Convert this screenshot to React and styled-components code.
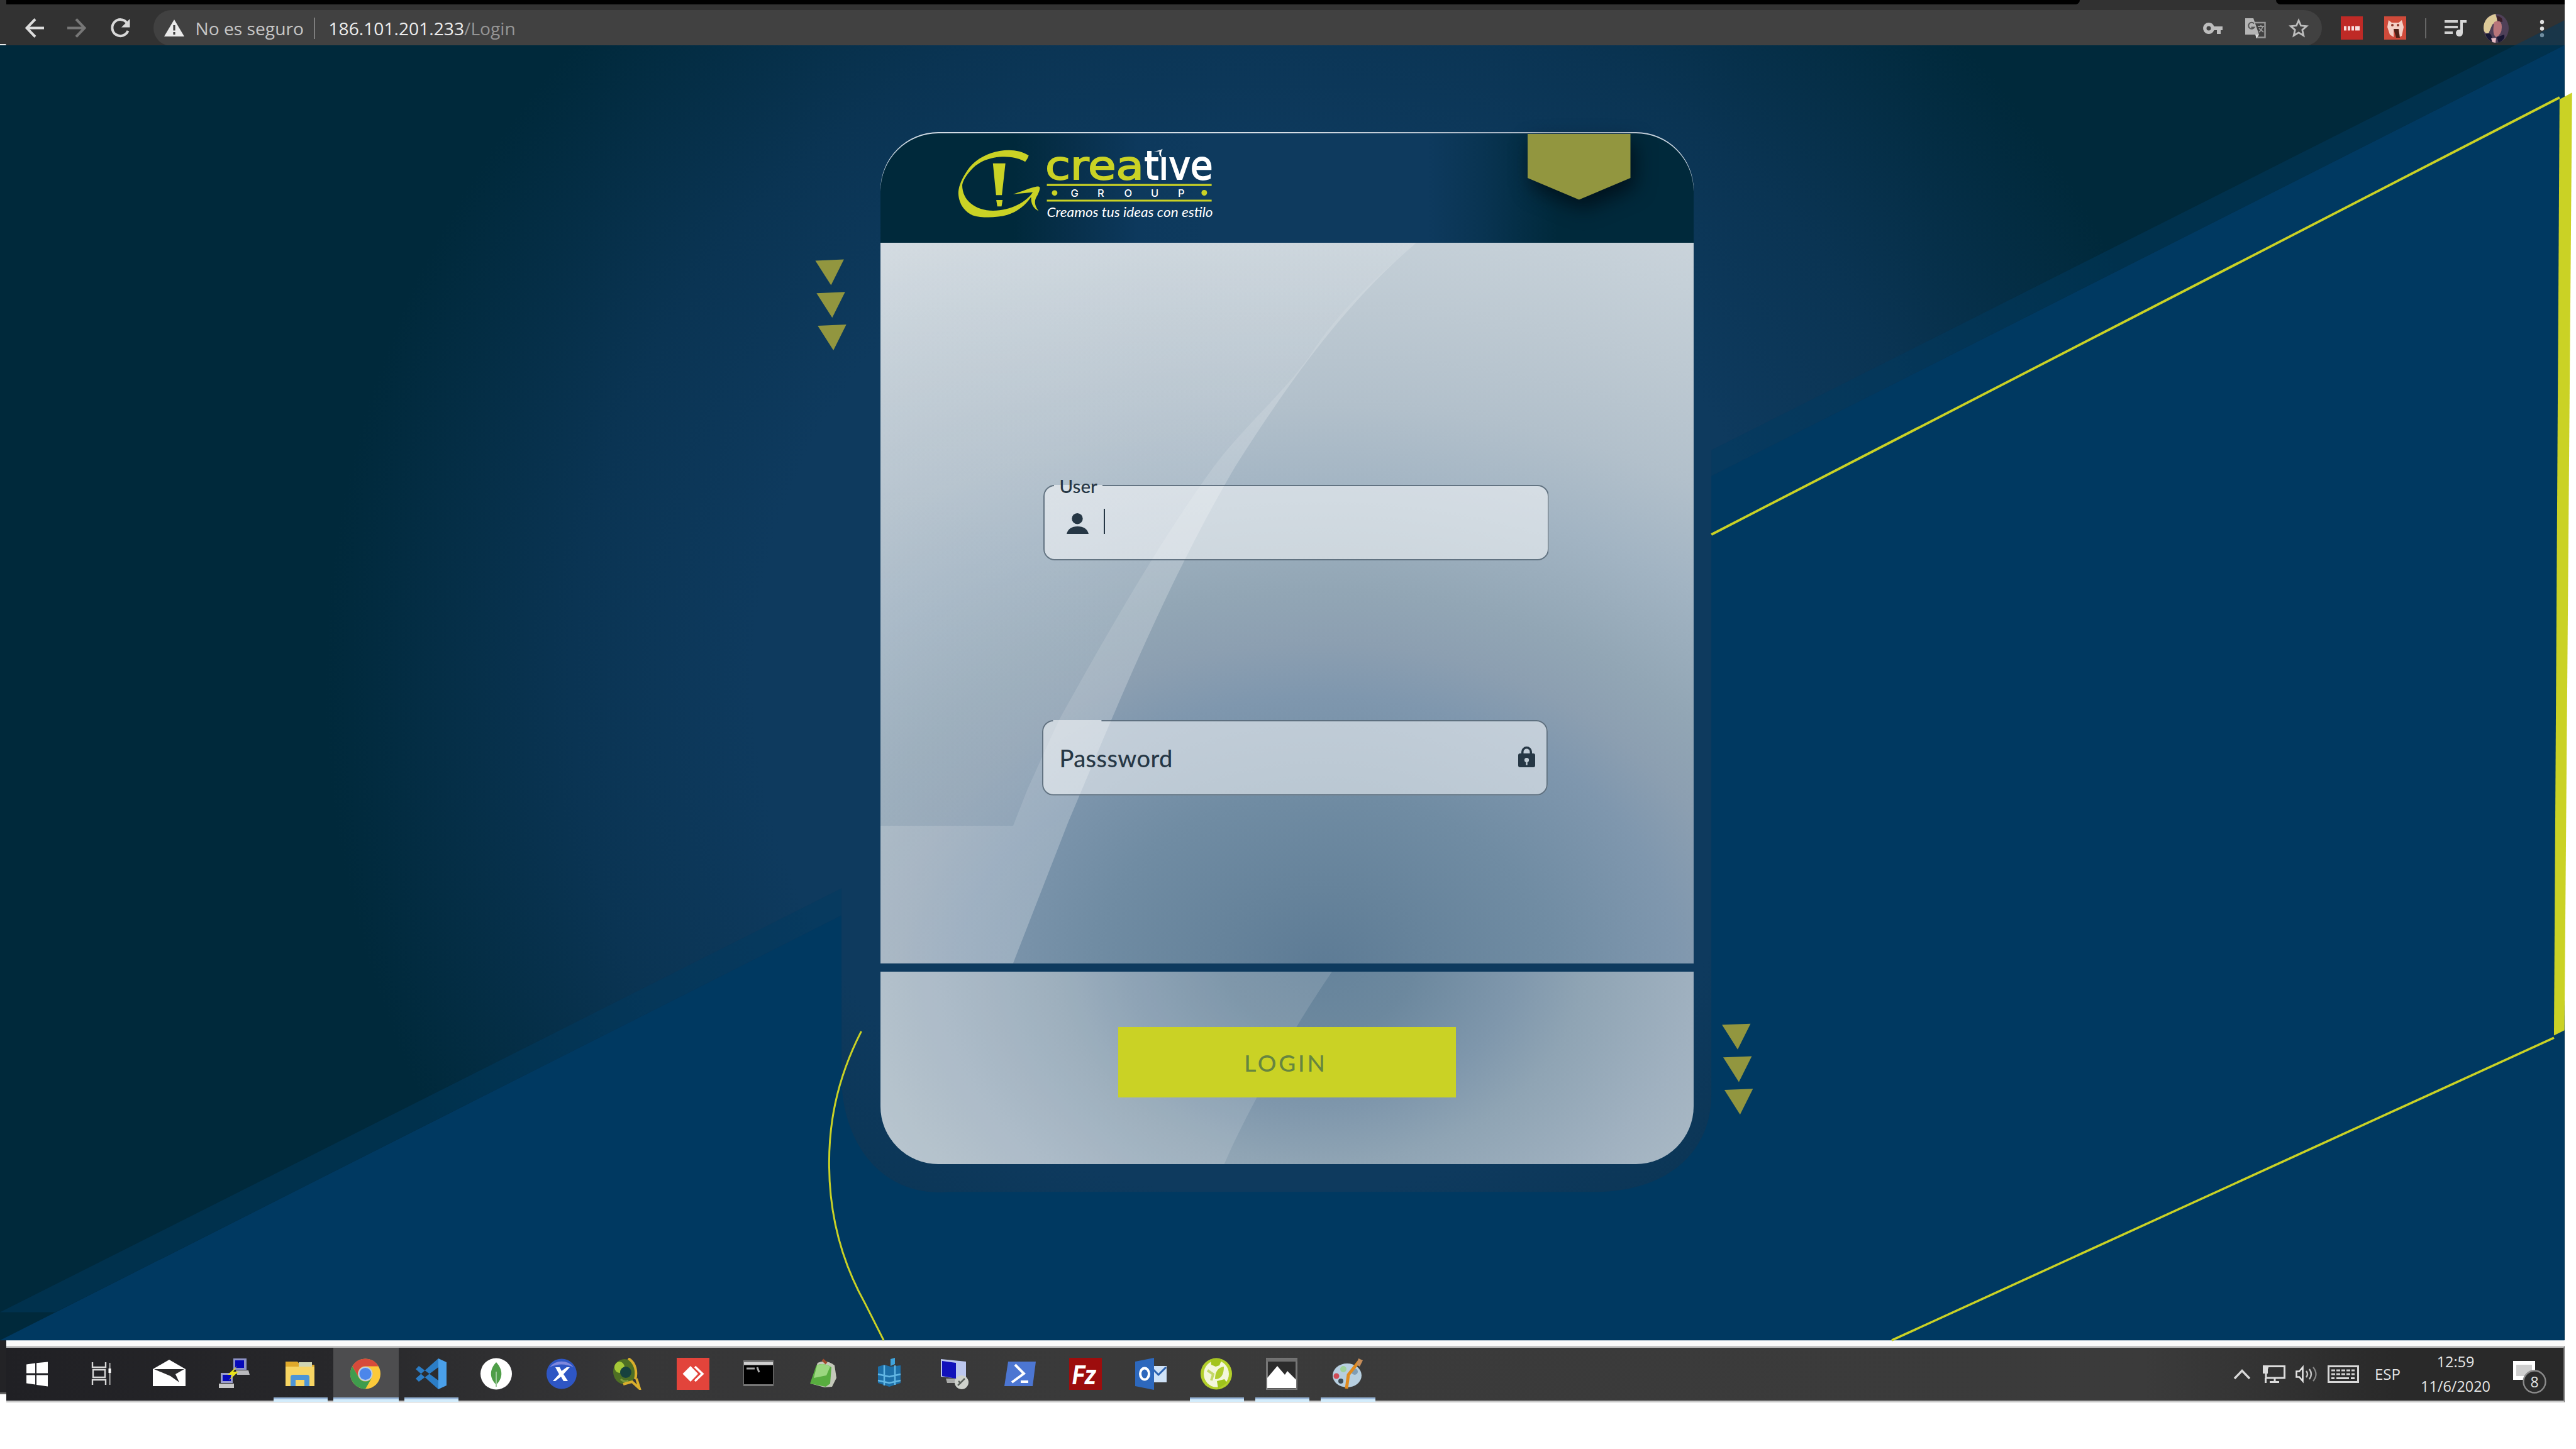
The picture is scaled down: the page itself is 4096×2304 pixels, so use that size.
import React from 'react';
import styled, { createGlobalStyle } from 'styled-components';

const LIME = '#cad225';
const OLIVE = '#92963f';
const INK = '#263745';

const Global = createGlobalStyle`
  * { box-sizing: border-box; }
  html, body { margin: 0; padding: 0; background: #fff; overflow: hidden; }
`;

const Screen = styled.div`
  position: relative;
  width: 4096px;
  height: 2304px;
  overflow: hidden;
  display: flex;
  flex-direction: column;
  background: #fff;
  font-family: 'Open Sans', 'Noto Sans', sans-serif;
`;

/* ---------- browser bar ---------- */
const Browser = styled.header`
  width: 4078px;
  height: 72px;
  flex: none;
  overflow: hidden;
  background: #323232;
`;
const TabStrip = styled.div`
  height: 6.5px;
  display: flex;
  padding-left: 9.6px;
`;
const TabGap = styled.div`
  width: ${(p) => p.$w}px;
  background: #000;
  border-radius: ${(p) => p.$r};
`;
const ActiveTab = styled.div`
  width: 312px;
`;
const NavRow = styled.div`
  height: 76px;
  display: flex;
  align-items: center;
  padding-left: 40px;
`;
const Glyph = styled.svg`
  display: block;
  flex: none;
  width: ${(p) => p.$w}px;
  height: ${(p) => p.$h}px;
  margin-left: ${(p) => p.$ml || 0}px;
  overflow: visible;
`;
const Omnibox = styled.div`
  width: 3448px;
  height: 57px;
  margin-left: 36px;
  border-radius: 29px;
  background: #414141;
  display: flex;
  align-items: center;
  padding-left: 17px;
`;
const UrlText = styled.span`
  font-size: 28.2px;
  line-height: 40px;
  white-space: nowrap;
  color: ${(p) => p.$c};
  margin-left: ${(p) => p.$ml || 0}px;
`;
const Rule = styled.div`
  width: 2.5px;
  height: ${(p) => p.$h}px;
  margin-left: ${(p) => p.$ml}px;
  background: ${(p) => p.$c};
`;
const Spacer = styled.div`
  flex: 1;
`;

/* ---------- page ---------- */
const Page = styled.main`
  width: 4078px;
  height: 2059px;
  flex: none;
  padding: 137.8px 0 0 1400px;
  background: radial-gradient(circle at 2019px 1014px, #0e3a5e 0, #0e3a5e 820px, #0a3453 1110px, #00293b 1502px);
`;
const Backdrop = styled.svg`
  position: absolute;
  left: 0;
  top: 0;
  width: 4096px;
  height: 2304px;
`;
const Card = styled.section`
  position: relative;
  width: 1293px;
  display: flex;
  flex-direction: column;
  gap: 13px;
`;
const UpperCard = styled.div`
  border-radius: 92px 92px 0 0;
  padding-top: 2.6px;
  background: linear-gradient(90deg, #cfdae4, #d6dee6 50%, #a9b7c6 75%, #cfdae4);
`;
const CardHeader = styled.header`
  position: relative;
  height: 174px;
  border-radius: 92px 92px 0 0;
  padding: 13.5px 0 0 108.5px;
  background: linear-gradient(90deg, #00293b 0, #00293b 212px, #072f4a 300px, #0d395d 410px, #0e3a5e 520px, #0e3a5e 870px, #093452 955px, #00293b 1077px);
`;
const Logo = styled.svg`
  display: block;
  width: 440px;
  height: 131px;
  overflow: visible;
`;
const RibbonShade = styled.div`
  position: absolute;
  left: 1029px;
  top: 0.6px;
  filter: drop-shadow(7px 14px 16px rgba(0, 10, 18, 0.75));
`;
const Ribbon = styled.div`
  width: 163.5px;
  height: 104.6px;
  background: ${OLIVE};
  clip-path: polygon(0 0, 100% 0, 100% 67%, 50% 100%, 0 67%);
`;
const Form = styled.div`
  position: relative;
  height: 1145.4px;
  padding: 384.6px 0 0 258.5px;
  display: flex;
  flex-direction: column;
  gap: 253.4px;
  background: radial-gradient(ellipse 1820px 1400px at 700px 1154px, #5d7b95 0, #66839b 9%, #708ca3 20%, #7f97ae 31%, #8c9fb1 37%, #92a6b5 43%, #a2b4c3 54%, #b2c0cb 64%, #bdc9d2 75%, #c5d0d8 84%, #ced6dd 93%, #d2dae0 100%);
`;
const Sheen = styled.svg`
  position: absolute;
  left: 0;
  top: 0;
  width: 1293px;
  height: ${(p) => p.$h}px;
`;
const Field = styled.div`
  position: relative;
  width: 804px;
  height: 120.2px;
  margin-left: ${(p) => p.$ml || 0}px;
  padding: 0 20.4px ${(p) => p.$pb}px ${(p) => p.$pl}px;
  border-radius: 18px;
  background: rgba(255, 255, 255, 0.52);
  background-clip: padding-box;
  display: flex;
  align-items: flex-end;
  &::before {
    content: '';
    position: absolute;
    inset: 0;
    border: 2.7px solid rgba(60, 80, 98, 0.75);
    border-radius: 18px;
    clip-path: polygon(0 0, 17.5px 0, 17.5px 10px, 94.5px 10px, 94.5px 0, 100% 0, 100% 100%, 0 100%);
  }
`;
const FloatLabel = styled.label`
  position: absolute;
  left: 26px;
  top: -11.8px;
  font: 500 29.5px/28.5px Lato, sans-serif;
  color: ${INK};
`;
const Placeholder = styled.span`
  font: 500 38px/38px Lato, sans-serif;
  letter-spacing: 0.4px;
  color: ${INK};
  margin-bottom: -4px;
`;
const Caret = styled.div`
  width: 2.7px;
  height: 39.6px;
  margin-left: 23.8px;
  background: ${INK};
`;
const CardFooter = styled.footer`
  position: relative;
  height: 306.4px;
  border-radius: 0 0 92px 92px;
  overflow: hidden;
  padding: 88px 0 0 378px;
  background: radial-gradient(ellipse 1000px 770px at 700px -20px, #65839b 0, #6c889e 15%, #7f97ac 31%, #8fa4b4 42%, #a0b1c0 60%, #afbec8 80%, #bac6d0 100%);
`;
const LoginButton = styled.button`
  position: relative;
  display: flex;
  align-items: center;
  justify-content: center;
  width: 536.7px;
  height: 112px;
  border: 0;
  border-radius: 0;
  padding: 2px 4px 0 0;
  background: ${LIME};
  color: #668540;
  font: 500 37px Lato, sans-serif;
  letter-spacing: 3.8px;
`;

/* ---------- taskbar ---------- */
const DockArea = styled.div`
  flex: none;
  display: flex;
  width: 4078px;
`;
const LeftSliver = styled.div`
  width: 9.6px;
  height: 86px;
  background: #232326;
  border-bottom: 3.5px solid #666;
`;
const DockColumn = styled.div`
  flex: 1;
  border-top: 9.4px solid #fafafa;
`;
const Dock = styled.nav`
  height: 89.8px;
  border-top: 3.6px solid #c4c4c4;
  border-bottom: 3.6px solid #c8c8c8;
  border-right: 2.4px solid #777;
  display: flex;
  background: linear-gradient(90deg, #202024 0, #27272a 500px, #363637 1000px, #3a3a3a 1700px, #3b3b3b 3400px, #303030 3650px, #292929 3800px, #292929 100%);
`;
const Slot = styled.div`
  position: relative;
  flex: none;
  width: 104.1px;
  height: 82.6px;
  display: flex;
  align-items: center;
  justify-content: center;
  background: ${(p) => (p.$active ? '#4d4d4f' : 'transparent')};
  &::after {
    content: '';
    display: ${(p) => (p.$open ? 'block' : 'none')};
    position: absolute;
    left: ${(p) => (p.$active ? 0 : 9)}px;
    right: ${(p) => (p.$active ? 0 : 9)}px;
    bottom: -3.6px;
    height: 6.8px;
    background: linear-gradient(#98b6d8 0 45%, #d3ecfb 45%);
  }
`;
const DockIcon = styled.svg`
  width: 52px;
  height: 51px;
  display: block;
  margin-right: ${(p) => p.$nudge}px;
`;
const Tray = styled.div`
  margin-left: auto;
  display: flex;
  align-items: center;
  color: #e4e4e4;
`;
const Lang = styled.span`
  font-size: 24px;
  width: 42px;
  margin-left: 25px;
`;
const Clock = styled.div`
  width: 113px;
  margin-left: 30px;
  text-align: center;
  font-size: 23.4px;
  line-height: 38.5px;
`;

const icons = [
  { id: 'start', nudge: 5, art: (
    <g fill="#fff"><path d="M9 10.500l14-2v16H9zM25 8.200L43 6.500v18H25zM9 27.500h14v15l-14-2zM25 27.500h18v18l-18-2.500z" /></g>) },
  { id: 'views', nudge: 7, art: (
    <g fill="none" stroke="#d8d8d8" strokeWidth="2.400"><path d="M11 7v8h21V7M11 43v-8h21v8M12 19h19v12H12z" /><path d="M38.500 8v35" stroke="#999" /><path d="M38.500 17v7" stroke="#fff" strokeWidth="4" /></g>) },
  { id: 'mail', art: (
    <g><path d="M0 18L26 3l26 15v27H0z" fill="#fff" /><path d="M2 18h48L36 26l6 13-14-10z" fill="#2a2a2c" /></g>) },
  { id: 'putty', nudge: 5, art: (
    <g><rect x="26" y="1" width="21" height="18" fill="#8d92c8" /><rect x="29" y="4" width="14" height="12" fill="#0608b8" /><path d="M30 20h20l2 7H32z" fill="#b9b9bd" /><rect x="6" y="24" width="19" height="16" fill="#9a9ccb" /><rect x="9" y="27" width="13" height="10" fill="#0608b8" /><path d="M3 41h24v7H3z" fill="#c7c7c7" /><path d="M32 13L17 27h8l-6 9 15-14h-8z" fill="#e8e21a" /></g>) },
  { id: 'folder', open: true, art: (
    <g><path d="M3 6h19l4 5h23v34H3z" fill="#dfa92b" /><rect x="24" y="7" width="21" height="9" fill="#cfd6b4" /><path d="M3 14h46v31H3z" fill="#f7d563" /><path d="M11 45V31q0-4 4-4h22q4 0 4 4v14h-8V35H19v10z" fill="#4c95d8" /></g>) },
  { id: 'chrome', open: true, active: true, art: (
    <g><circle cx="26" cy="25.500" r="24" fill="#fbc93a" /><path d="M5.200 13.500A24 24 0 0 1 46.800 13.500H26a12 12 0 0 0-10.400 18z" fill="#d64a3b" /><path d="M5.200 13.500A24 24 0 0 0 26 49.500L36.400 31.500a12 12 0 0 1-20.800 0z" fill="#3f9c4d" /><circle cx="26" cy="25.500" r="11.500" fill="#b9cbe9" /><circle cx="26" cy="25.500" r="9.500" fill="#4c86ea" /></g>) },
  { id: 'code', open: true, art: (
    <g><path d="M38 1L2 33l5 5 31-23zM38 50L2 18l5-5 31 23z" fill="#2b7dc6" /><path d="M38 1l13 6v37l-13 6z" fill="#4aa0ea" /></g>) },
  { id: 'mongo', art: (
    <g><circle cx="26" cy="25.500" r="25" fill="#fff" /><path d="M26 7c12 13 10 26 0 36-10-10-12-23 0-36z" fill="#4f9e48" /><path d="M26 22v24" stroke="#9cc79a" strokeWidth="2" /></g>) },
  { id: 'xming', art: (
    <g><circle cx="26" cy="25.500" r="24" fill="#2e56c4" /><path d="M7 15a24 24 0 0 1 38 0q-19-9-38 0z" fill="#7f88dd" /><path d="M16 15h7l3 6 8-6h5L29 26l7 11h-7l-4-7-9 7h-4l10-11z" fill="#fff" /></g>) },
  { id: 'gis', art: (
    <g><ellipse cx="22" cy="22" rx="18" ry="20" fill="#4e6f24" /><ellipse cx="14" cy="15" rx="8" ry="9" fill="#a5c838" /><circle cx="24" cy="23" r="9" fill="#17413e" /><path d="M16 34q6 6 12 2" stroke="#7c9a3a" strokeWidth="3" fill="none" /><path d="M28 1c12 7 14 22 11 33M20 42l14-4 12 11-5-16" stroke="#d9ae2c" strokeWidth="4" fill="none" /></g>) },
  { id: 'anydesk', art: (
    <g><rect width="52" height="51" fill="#e2443b" /><path d="M22 13l12 12.500L22 38 9.500 25.500z" fill="#fff" /><path d="M29 14l12 11.500L29 37" stroke="#fff" strokeWidth="3.500" fill="none" /></g>) },
  { id: 'cmd', art: (
    <g><rect x="2" y="4" width="48" height="41" fill="#777" /><rect x="3" y="7" width="46" height="4" fill="#d0d0d0" /><rect x="3" y="12" width="46" height="30" fill="#000" /><path d="M7 17h13M24 15l3 8" stroke="#aaa" strokeWidth="3" /></g>) },
  { id: 'notes', art: (
    <g><path d="M16 8q14-6 27 4l3 20-7 14-12 1-22-6z" fill="#c4c8ba" /><path d="M14 12q12-5 24 3l-2 26-7 5-25-5z" fill="#58ad3f" /><path d="M15 12q10-5 21 2l-6 14-20 4z" fill="#9bd77f" /><path d="M24 3l6 6" stroke="#a04a2c" strokeWidth="4" /></g>) },
  { id: 'cubes', art: (
    <g><path d="M8 14l10-3 10 3 16-2v28l-18 6-18-6z" fill="#1c6fa8" /><path d="M8 26l18 4 18-4M18 12v32M35 12v31M8 36l18 4 18-4" stroke="#62b7e4" strokeWidth="2.500" fill="none" /><path d="M28 2l7-2v10l-7 3z" fill="#3fa3dc" /></g>) },
  { id: 'remote', art: (
    <g><path d="M4 2l40 4v28L4 30z" fill="#bcc7ee" /><path d="M6 5l22 3v25L6 29z" fill="#1112bb" /><path d="M12 33h20l4 7H14z" fill="#a9aaa8" /><circle cx="37" cy="39" r="11" fill="#cfd2cc" /><path d="M31 44l11-11M32 37l4 4" stroke="#5a605a" strokeWidth="2.500" /></g>) },
  { id: 'shell', art: (
    <g><path d="M7 6h44l-5 39H1z" fill="#4c76d2" /><path d="M18 11l14 14-19 14M27 38h12" stroke="#fff" strokeWidth="4" fill="none" /></g>) },
  { id: 'filezilla', art: (
    <g><rect width="52" height="51" fill="#9d0d0d" /><text x="5" y="42" fill="#fff" fontFamily="Roboto" fontStyle="italic" fontWeight="700" fontSize="42" textLength="38" lengthAdjust="spacingAndGlyphs">Fz</text></g>) },
  { id: 'outlook', art: (
    <g><rect x="24" y="13" width="27" height="26" fill="#cfe2f7" /><path d="M26 15l12 12 12-12" stroke="#2b62b0" strokeWidth="3" fill="none" /><path d="M1 6l30-6v51L1 45z" fill="#2d68bd" /><ellipse cx="16" cy="25.500" rx="7" ry="9" fill="none" stroke="#fff" strokeWidth="4" /></g>) },
  { id: 'leaf', open: true, art: (
    <g><circle cx="26" cy="25.500" r="25" fill="#b3cf2a" /><ellipse cx="26" cy="25.500" rx="20" ry="21" fill="#f3f6dc" /><path d="M17 2h18l-4 10-6 2-7-3z" fill="#a3c41d" /><path d="M27 37l12-3 4 6-14 9z" fill="#9fc41c" /><path d="M38 14q-14 2-14 20 14 0 14-20z" fill="#b0cd2d" /><path d="M12 20l9 6-3 10" stroke="#c3d866" strokeWidth="4" fill="none" /></g>) },
  { id: 'photos', open: true, art: (
    <g><path d="M2.500 1h47v49h-47z" fill="#2c2c2c" stroke="#777" strokeWidth="3" /><path d="M1 1h50v5H1z" fill="#707070" /><path d="M3 48V32l16-19 12 14 4-6 14 14v13z" fill="#fff" /></g>) },
  { id: 'paint', open: true, art: (
    <g><ellipse cx="25" cy="28" rx="23" ry="19" fill="#b7cfe0" /><circle cx="8" cy="29" r="4.500" fill="#cf4a55" /><circle cx="19" cy="18" r="5" fill="#9fd29a" /><circle cx="15" cy="37" r="4" fill="#3d4c57" /><circle cx="37" cy="22" r="5" fill="#7f9db5" /><path d="M46 3L27 27l-3 22" stroke="#e08a1e" strokeWidth="5" fill="none" /><path d="M43 1l7 3-5 10-5-3z" fill="#c68d59" /></g>) },
];

const Arrows = ({ x, y }) => (
  <g fill={OLIVE} transform={`translate(${x} ${y})`}>
    {[0, 1, 2].map((i) => (
      <path key={i} d="M0 3.200L76.500 0 42 69z" transform={`translate(${i * 3.2} ${i * 87.1})`} />
    ))}
  </g>
);

function BrowserBar() {
  return (
    <Browser>
      <TabStrip>
        <TabGap $w={3302} $r="0 0 14px 0" />
        <ActiveTab />
        <TabGap $w={460} $r="0 0 0 14px" />
      </TabStrip>
      <NavRow>
        <Glyph $w={30} $h={31} viewBox="0 0 30 31"><path d="M30 15.500H3M16 1.500L2.500 15.500 16 29.500" fill="none" stroke="#dcdcdc" strokeWidth="4" /></Glyph>
        <Glyph $w={30} $h={31} $ml={37} viewBox="0 0 30 31"><path d="M0 15.500h27M14 1.500l13.500 14L14 29.500" fill="none" stroke="#777" strokeWidth="4" /></Glyph>
        <Glyph $w={34} $h={32} $ml={37} viewBox="0 0 34 32"><path d="M28 7.500A13 13 0 1 0 29.500 20" fill="none" stroke="#d8d8d8" strokeWidth="4" /><path d="M32.500 1v13.500H19z" fill="#d8d8d8" /></Glyph>
        <Omnibox>
          <Glyph $w={32} $h={27} viewBox="0 0 32 27"><path d="M16 0l16 27H0z" fill="#eaeaea" /><path d="M16 9v8.500M16 20v4" stroke="#414141" strokeWidth="3.200" /></Glyph>
          <UrlText $c="#c6c6c6" $ml={17.500}>No es seguro</UrlText>
          <Rule $h={34} $ml={16} $c="#7d7d7d" />
          <UrlText $c="#ededed" $ml={21}>186.101.201.233</UrlText>
          <UrlText $c="#959595">/Login</UrlText>
          <Spacer />
          <Glyph $w={31} $h={18} viewBox="0 0 31 18"><path d="M9 0a9 9 0 0 1 8.500 6H31v6h-3v6h-6v-6h-4.500A9 9 0 1 1 9 0zm0 5.500a3.500 3.500 0 1 0 0 7 3.500 3.500 0 0 0 0-7z" fill="#bdbdbd" /></Glyph>
          <Glyph $w={33} $h={32} $ml={35.500} viewBox="0 0 33 32"><path d="M15 7h16.500v23.500H17" fill="none" stroke="#999" strokeWidth="2.400" /><path d="M0 0h13l9 26H0z" fill="#b5b5b5" /><path d="M14 8.500a5 5 0 1 0 .5 6h-5" fill="none" stroke="#555" strokeWidth="2" /><path d="M20 13h10M25 11v2M28 13q-2 6-6 9M22 16l7 6" stroke="#999" strokeWidth="1.800" fill="none" /><path d="M16 26h6l-4 6z" fill="#ddd" /></Glyph>
          <Glyph $w={30} $h={31} $ml={37.500} viewBox="0 0 30 31"><path d="M15 3.500l3.600 8.300 9 .8-6.800 6 2 8.900L15 22.800l-7.800 4.700 2-8.900-6.800-6 9-.8z" fill="none" stroke="#bdbdbd" strokeWidth="2.800" /></Glyph>
          <Glyph $w={22} $h={1} />
        </Omnibox>
        <Glyph $w={35} $h={37} $ml={30} viewBox="0 0 35 37"><rect width="35" height="37" fill="#bf2a26" /><path d="M5 19h4M11 19h4M17 19h4M23 19h7" stroke="#f7dede" strokeWidth="7" /></Glyph>
        <Glyph $w={35} $h={37} $ml={34} viewBox="0 0 35 37"><rect width="35" height="37" fill="#cf4a3a" /><path d="M7 6l5 4h11l5-4 3 11-3 14-6 3V20H15v13l-6-4-4-12z" fill="#f3cfc6" /><path d="M15 20h8l2 14h-6z" fill="#4e2017" /><circle cx="13" cy="14" r="2" fill="#8d3428" /><circle cx="22" cy="14" r="2" fill="#8d3428" /></Glyph>
        <Rule $h={32} $ml={29.500} $c="#666" />
        <Glyph $w={35} $h={26} $ml={28.500} viewBox="0 0 35 26"><path d="M0 2h21M0 11h21M0 20h13" stroke="#d0d0d0" strokeWidth="4" /><path d="M27 20V2h8" fill="none" stroke="#d8d8d8" strokeWidth="4" /><circle cx="23.500" cy="20.500" r="5.500" fill="#d8d8d8" /></Glyph>
        <Glyph $w={42} $h={48} $ml={26} viewBox="0 0 42 48"><ellipse cx="21" cy="24" rx="20" ry="23" fill="#4f4058" /><path d="M20 1Q1 6 1 24q1 10 8 8l6-14 8-6z" fill="#dcc998" /><path d="M22 4q10 2 9 10l-8-1z" fill="#3a1f2a" /><path d="M18 14q12-5 12 8 0 12-9 16-7-4-3-24z" fill="#b8757a" /><path d="M4 33q8-3 10 4l2 9Q6 42 4 33zM22 38l12-4q2 8-9 13z" fill="#171633" /><path d="M13 40l8-1-1 8-5-1z" fill="#e8bcc4" /></Glyph>
        <Glyph $w={6} $h={28} $ml={49} viewBox="0 0 6 28"><g fill="#dedede"><circle cx="3" cy="4" r="3.200" /><circle cx="3" cy="14.500" r="3.200" /><circle cx="3" cy="25" r="3.200" /></g></Glyph>
      </NavRow>
    </Browser>
  );
}

function PageBackdrop() {
  return (
    <Backdrop viewBox="0 0 6897 3879" preserveAspectRatio="none">
      <defs>
        <mask id="frame" maskUnits="userSpaceOnUse" x="0" y="0" width="6897" height="3879">
          <rect width="6897" height="3879" fill="#fff" />
          <path d="M2253 700H4582V2930C4582 3080 4470 3190 4270 3191H2540C2360 3205 2253 3060 2253 2880Z" fill="#000" />
        </mask>
      </defs>
      <g mask="url(#frame)">
        <path d="M6866 54.500L0 3513H148L6866 121Z" fill="#003960" fillOpacity="0.500" />
        <path d="M6866 121L0 3588H6866Z" fill="#003961" />
      </g>
      <path d="M0 118h16v3H0z" fill="#fff" />
      <path d="M4582 1431L6853 261" stroke={LIME} strokeWidth="6.500" />
      <path d="M6838 2778L5065 3588" stroke={LIME} strokeWidth="6" />
      <path d="M6853 266L6886.500 248L6866 2758L6838 2772Z" fill={LIME} />
      <path d="M2306 2761C2235 2900 2219 3020 2220 3121C2221 3260 2255 3380 2316 3489L2366 3588" fill="none" stroke={LIME} strokeWidth="5" />
      <Arrows x={2183} y={694.6} />
      <Arrows x={4610.5} y={2740.4} />
    </Backdrop>
  );
}

function BrandLogo() {
  return (
    <Logo viewBox="0 0 440 131">
      <g transform="scale(.28028 .19797)">
        <g fill={LIME}>
          <path d="M452 107C420 78 380 64 340 64C240 64 150 130 105 225C70 300 53 360 53 410C55 500 90 560 135 588C190 612 270 608 330 585C390 560 435 505 466 440C464 490 475 530 508 553C480 500 485 460 500 430C512 400 516 375 515 365C514 357 505 355 495 358C455 370 410 400 362 418L475 403C440 480 350 550 250 551C150 550 75 470 75 345C80 300 110 240 150 190C200 135 260 117 315 117C360 118 400 130 432 158C442 140 448 125 452 107Z" />
          <path d="M249 171H320L300 426H267ZM268 465H304L298 516H274Z" />
          <path d="M555 336H1490V352H555ZM555 462H1490V477H555Z" />
          <ellipse cx="599" cy="408" rx="16" ry="22" />
          <ellipse cx="1448" cy="407" rx="16" ry="23" />
        </g>
        <path d="M1161 76C1180 72 1198 64 1212 54C1204 76 1198 92 1208 122C1192 106 1190 92 1195 74Z" fill="#fff" />
      </g>
      <g fontFamily="'DejaVu Sans', sans-serif" fontSize="63" strokeWidth="1.800">
        <text x="153" y="59" fill={LIME} stroke={LIME} textLength="157" lengthAdjust="spacingAndGlyphs">crea</text>
        <text x="310.500" y="59" fill="#fff" stroke="#fff" textLength="109" lengthAdjust="spacingAndGlyphs">tıve</text>
      </g>
      <text x="193.500 236 278.500 321 364" y="86.700" fill="#fff" fontFamily="Inter, sans-serif" fontWeight="500" fontSize="16.500">GROUP</text>
      <text x="155.500" y="118.700" fill="#fff" fontFamily="Lato, sans-serif" fontStyle="italic" fontSize="21" textLength="264" lengthAdjust="spacingAndGlyphs">Creamos tus ideas con estilo</text>
    </Logo>
  );
}

function LoginCard() {
  return (
    <Card>
      <UpperCard>
        <CardHeader>
          <BrandLogo />
          <RibbonShade><Ribbon /></RibbonShade>
        </CardHeader>
        <Form>
          <Sheen $h={1145.4} viewBox="0 0 1293 1145.400">
            <defs>
              <linearGradient id="sheenA" x1="0" y1="0" x2="0" y2="1"><stop offset="0" stopColor="#fff" stopOpacity=".2" /><stop offset="1" stopColor="#fff" stopOpacity=".25" /></linearGradient>
              <linearGradient id="sheenB" x1="0" y1="0" x2="0" y2="1"><stop offset="0" stopColor="#5d7b95" stopOpacity="0.020" /><stop offset=".3" stopColor="#5d7b95" stopOpacity=".09" /><stop offset="1" stopColor="#5d7b95" stopOpacity=".2" /></linearGradient>
            </defs>
            <path d="M0 0H852C740 95 650 220 564 356C450 550 365 765 299 920L211 1145.400H0Z" fill="url(#sheenA)" />
            <path d="M0 0H852C770 70 720 120 680 184C630 250 580 290 530 356C440 480 350 640 285 757C260 810 245 845 233 871L211 927H0Z" fill="url(#sheenB)" />
          </Sheen>
          <Field $pl={37.300} $pb={42.600}>
            <FloatLabel>User</FloatLabel>
            <Glyph $w={35} $h={33} viewBox="0 0 35 33"><circle cx="17" cy="8.700" r="8.700" fill={INK} /><path d="M0 33C2 25 8 21 17.500 21S33 25 35 33Z" fill={INK} /></Glyph>
            <Caret />
          </Field>
          <Field $ml={-1.6} $pl={27.500} $pb={45}>
            <Placeholder>Passsword</Placeholder>
            <Spacer />
            <Glyph $w={27} $h={33} viewBox="0 0 27 33"><path d="M3 11H5V8.500a8.500 8.500 0 0 1 17 0V11h2a3 3 0 0 1 3 3v16a3 3 0 0 1-3 3H3a3 3 0 0 1-3-3V14a3 3 0 0 1 3-3zm5.500 0h10V8.500a5 5 0 0 0-10 0z" fill={INK} /><circle cx="13.500" cy="21.500" r="3.600" fill="#c3ced7" /><path d="M12.300 22h2.400v7.500h-2.400z" fill="#c3ced7" /></Glyph>
          </Field>
        </Form>
      </UpperCard>
      <CardFooter>
        <Sheen $h={306.4} viewBox="0 0 1293 306.400">
          <path d="M0 0H718C670 70 630 140 599 199C580 235 562 270 546.500 306.400H0Z" fill="#fff" fillOpacity=".13" />
        </Sheen>
        <LoginButton>LOGIN</LoginButton>
      </CardFooter>
    </Card>
  );
}

function Taskbar() {
  return (
    <DockArea>
      <LeftSliver />
      <DockColumn>
        <Dock>
          {icons.map((i) => (
            <Slot key={i.id} $open={i.open} $active={i.active}>
              <DockIcon $nudge={i.nudge || 2} viewBox="0 0 52 51">{i.art}</DockIcon>
            </Slot>
          ))}
          <Tray>
            <Glyph $w={28} $h={16} viewBox="0 0 28 16"><path d="M2 15L14 2.500 26 15" fill="none" stroke="#d8d8d8" strokeWidth="3.400" /></Glyph>
            <Glyph $w={36} $h={28} $ml={19} viewBox="0 0 36 28"><path d="M9 1.500h25.500v18.500H5V12M19 20v7M11 26.500h15M4.500 20v8" fill="none" stroke="#dcdcdc" strokeWidth="3" /><path d="M0 0h9v5H8v8H0z" fill="#dcdcdc" /></Glyph>
            <Glyph $w={34} $h={28} $ml={16} viewBox="0 0 34 28"><path d="M1.500 9.500H6L11.500 3v22L6 18.500H1.500z" fill="none" stroke="#e4e4e4" strokeWidth="2.600" /><path d="M17 9q4 5 0 10M22 6q6 8 0 16" fill="none" stroke="#c4c4c4" strokeWidth="2.400" /><path d="M28 3q9 11 0 22" fill="none" stroke="#888" strokeWidth="2.200" /></Glyph>
            <Glyph $w={50} $h={28} $ml={17} viewBox="0 0 50 28"><path d="M1.500 1.500h47v25h-47z" fill="none" stroke="#d8d8d8" strokeWidth="3" /><path d="M6 8h37M6 14h37" stroke="#d0d0d0" strokeWidth="3" strokeDasharray="6 2" /><path d="M6 20.500h5M14 20.500h20M37 20.500h6" stroke="#dcdcdc" strokeWidth="3" /></Glyph>
            <Lang>ESP</Lang>
            <Clock>12:59<br />11/6/2020</Clock>
            <Glyph $w={80} $h={56} $ml={35} viewBox="0 0 80 56"><path d="M0 7h35v30H22l-6 7v-7H0z" fill="#fff" /><path d="M5 13h25v18H5z" fill="#cfcfcf" /><circle cx="34" cy="40" r="17.500" fill="#2b2b2b" stroke="#8a8a8a" strokeWidth="2.400" /><text x="34" y="48.500" textAnchor="middle" fill="#e4e4e4" fontFamily="'Open Sans', sans-serif" fontSize="23">8</text></Glyph>
          </Tray>
        </Dock>
      </DockColumn>
    </DockArea>
  );
}

export default function App() {
  return (
    <Screen>
      <Global />
      <PageBackdrop />
      <BrowserBar />
      <Page>
        <LoginCard />
      </Page>
      <Taskbar />
    </Screen>
  );
}
